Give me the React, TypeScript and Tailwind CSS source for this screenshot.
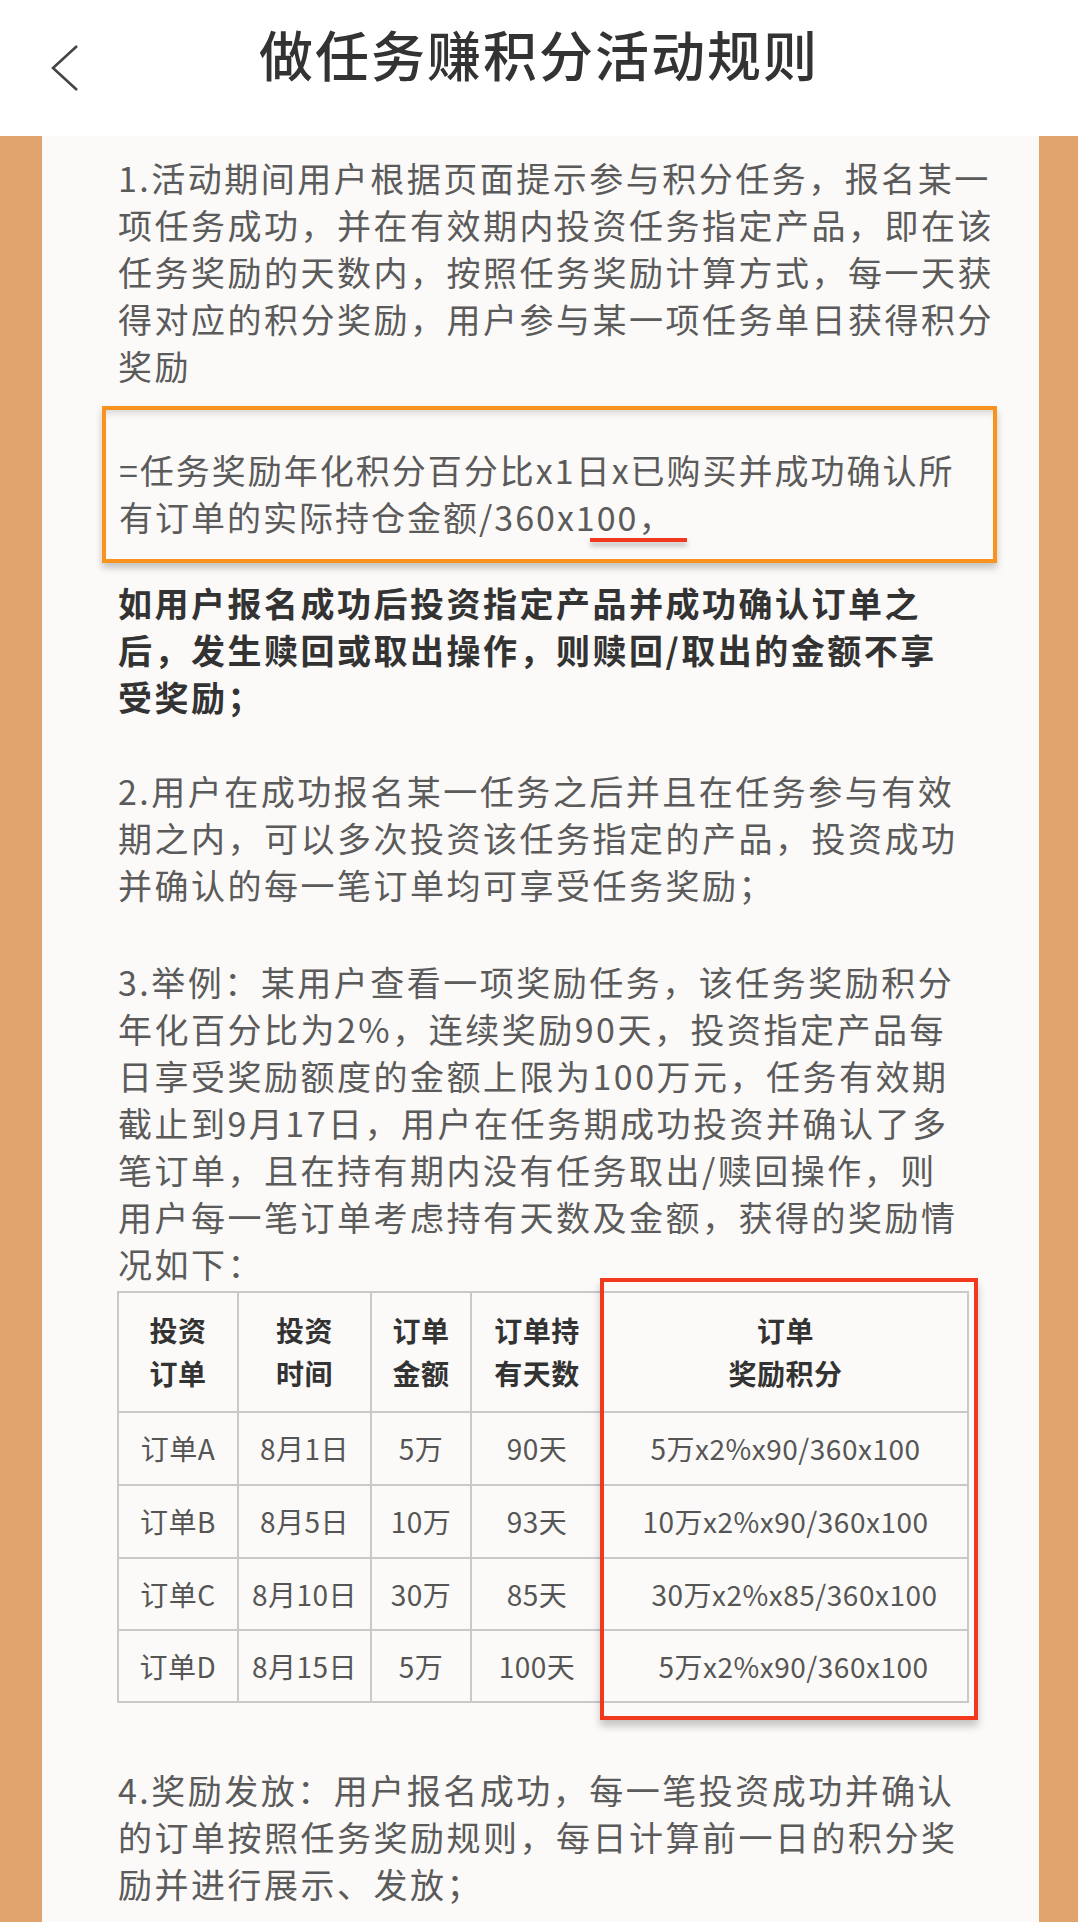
const font = "font-['Noto_Sans_CJK_SC','Noto_Sans',sans-serif]"

const para1 = [
	'1.活动期间用户根据页面提示参与积分任务，报名某一',
	'项任务成功，并在有效期内投资任务指定产品，即在该',
	'任务奖励的天数内，按照任务奖励计算方式，每一天获',
	'得对应的积分奖励，用户参与某一项任务单日获得积分',
	'奖励'
]

const boldPara = [
	'如用户报名成功后投资指定产品并成功确认订单之',
	'后，发生赎回或取出操作，则赎回/取出的金额不享',
	'受奖励；'
]

const para2 = [
	'2.用户在成功报名某一任务之后并且在任务参与有效',
	'期之内，可以多次投资该任务指定的产品，投资成功',
	'并确认的每一笔订单均可享受任务奖励；'
]

const para3 = [
	'3.举例：某用户查看一项奖励任务，该任务奖励积分',
	'年化百分比为2%，连续奖励90天，投资指定产品每',
	'日享受奖励额度的金额上限为100万元，任务有效期',
	'截止到9月17日，用户在任务期成功投资并确认了多',
	'笔订单，且在持有期内没有任务取出/赎回操作，则',
	'用户每一笔订单考虑持有天数及金额，获得的奖励情',
	'况如下：'
]

const para4 = [
	'4.奖励发放：用户报名成功，每一笔投资成功并确认',
	'的订单按照任务奖励规则，每日计算前一日的积分奖',
	'励并进行展示、发放；'
]

const rows = [
	{ order: '订单A', date: '8月1日', amount: '5万', days: '90天', points: '5万x2%x90/360x100', shift: '' },
	{ order: '订单B', date: '8月5日', amount: '10万', days: '93天', points: '10万x2%x90/360x100', shift: '' },
	{ order: '订单C', date: '8月10日', amount: '30万', days: '85天', points: '30万x2%x85/360x100', shift: 'pl-[18px]' },
	{ order: '订单D', date: '8月15日', amount: '5万', days: '100天', points: '5万x2%x90/360x100', shift: 'pl-[16px]' }
]

function Lines({ lines }: { lines: string[] }) {
	return (
		<>
			{lines.map((line, i) => (
				<div key={i} className="whitespace-nowrap">
					{line}
				</div>
			))}
		</>
	)
}

function Header() {
	return (
		<div className="grid h-[136px] grid-cols-[1fr_auto_1fr] items-center bg-white">
			<div className="pl-[50px]">
				<svg width="30" height="48" viewBox="0 0 30 48" fill="none">
					<path d="M27 2 L3 24 L27 46" stroke="#444" strokeWidth="2.6" strokeLinejoin="miter" />
				</svg>
			</div>
			<div className="pb-[28px] text-[54px] font-medium leading-none tracking-[2px] text-[#333]">做任务赚积分活动规则</div>
			<div></div>
		</div>
	)
}

function RewardTable() {
	const th = 'border-2 border-[#c9c9c9] px-0 text-center align-middle font-bold text-[#333] leading-[43px]'
	const td = 'border-2 border-[#c9c9c9] px-0 text-center align-middle text-[#555]'
	return (
		<div className="relative ml-[75px] mt-[4px] w-[850px]">
			<table className="w-[850px] table-fixed border-collapse text-[28px] tracking-[0.5px]">
				<colgroup>
					<col className="w-[120px]" />
					<col className="w-[133px]" />
					<col className="w-[100px]" />
					<col className="w-[132px]" />
					<col className="w-[365px]" />
				</colgroup>
				<thead>
					<tr className="h-[120px]">
						<th className={th}>
							投资
							<br />
							订单
						</th>
						<th className={th}>
							投资
							<br />
							时间
						</th>
						<th className={th}>
							订单
							<br />
							金额
						</th>
						<th className={th}>
							订单持
							<br />
							有天数
						</th>
						<th className={th}>
							订单
							<br />
							奖励积分
						</th>
					</tr>
				</thead>
				<tbody>
					{rows.map((r, i) => (
						<tr key={i} className={i < 2 ? 'h-[73px]' : 'h-[72px]'}>
							<td className={td}>{r.order}</td>
							<td className={td}>{r.date}</td>
							<td className={td}>{r.amount}</td>
							<td className={td}>{r.days}</td>
							<td className={`${td} whitespace-nowrap ${r.shift}`}>{r.points}</td>
						</tr>
					))}
				</tbody>
			</table>
			{/* red highlight frame over the last column */}
			<div className="pointer-events-none absolute left-[483px] top-[-13px] h-[442px] w-[378px] border-4 border-[#f2391d] shadow-[0_6px_8px_rgba(0,0,0,0.22)]"></div>
		</div>
	)
}

export default function App() {
	return (
		<div className={`min-h-[1922px] w-[1078px] bg-white ${font}`}>
			<Header />
			<div className="flex min-h-[1786px]">
				<div className="w-[42px] shrink-0 bg-[#e1a46c]"></div>
				<div className="flex-1 bg-[#fbfaf8] pt-[18px] text-[34px] leading-[47px] tracking-[2.5px] text-[#5b5b5b]">
					<div className="ml-[76px]">
						<Lines lines={para1} />
					</div>

					{/* formula box */}
					<div className="relative ml-[60px] mt-[17px] w-[895px] border-4 border-[#f7931e] pb-[19px] pl-[13px] pt-[36px] tracking-[2px] shadow-[0_5px_7px_rgba(0,0,0,0.22),inset_0_8px_8px_-6px_rgba(0,0,0,0.18)]">
						<div className="whitespace-nowrap">=任务奖励年化积分百分比x1日x已购买并成功确认所</div>
						<div className="whitespace-nowrap">有订单的实际持仓金额/360x100，</div>
						<div className="absolute left-[484px] top-[128px] h-[4px] w-[97px] bg-[#f2391d] shadow-[0_4px_5px_rgba(0,0,0,0.25)]"></div>
					</div>

					<div className="ml-[76px] mt-[16px] font-bold text-[#333]">
						<Lines lines={boldPara} />
					</div>

					<div className="ml-[76px] mt-[47px]">
						<Lines lines={para2} />
					</div>

					<div className="ml-[76px] mt-[50px]">
						<Lines lines={para3} />
					</div>

					<RewardTable />

					<div className="ml-[76px] mt-[63px]">
						<Lines lines={para4} />
					</div>
				</div>
				<div className="w-[39px] shrink-0 bg-[#e1a46c]"></div>
			</div>
		</div>
	)
}
